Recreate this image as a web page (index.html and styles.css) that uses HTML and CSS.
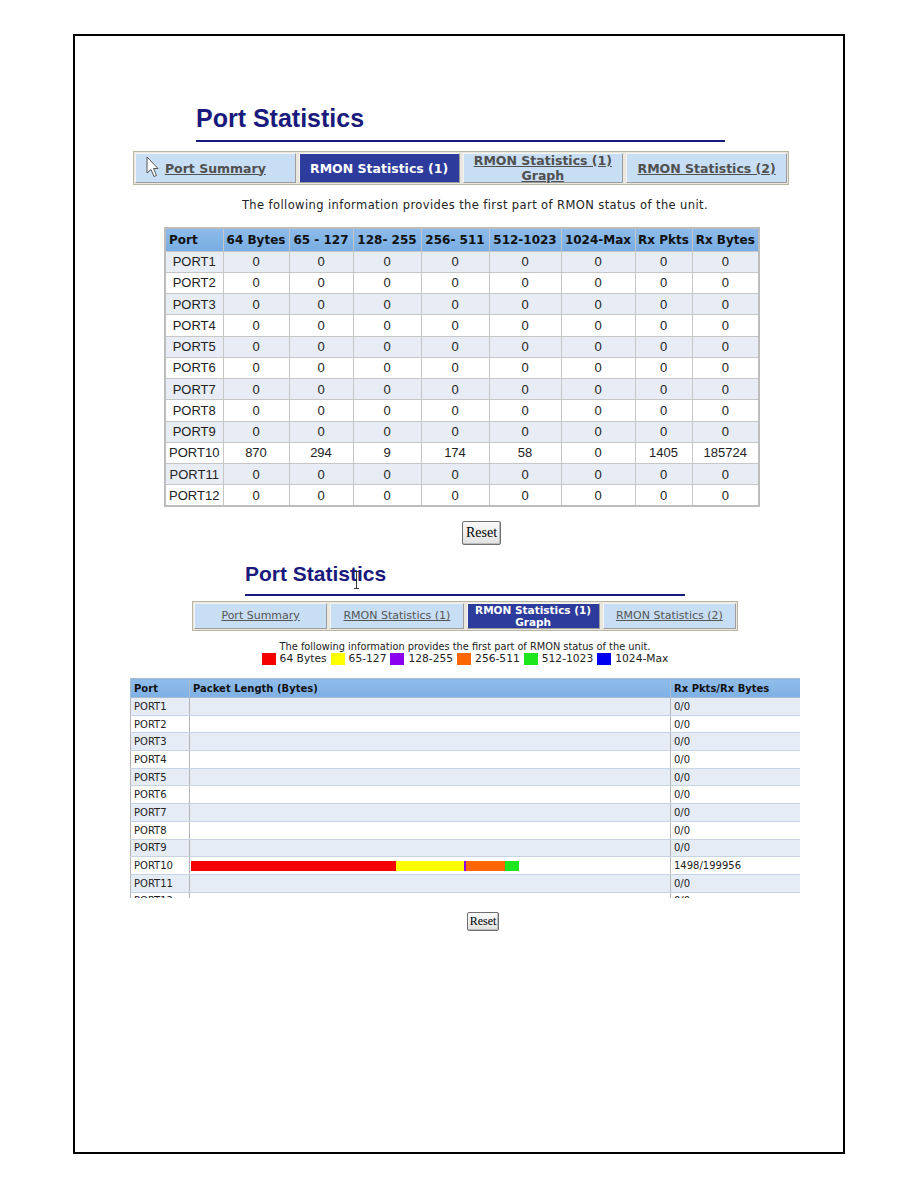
FILE: index.html
```html
<!DOCTYPE html>
<html>
<head>
<meta charset="utf-8">
<title>Port Statistics</title>
<link rel="stylesheet" href="styles.css">
</head>
<body>
<div class="page">
  <section class="panel1">
    <h1 class="title title1">Port Statistics</h1>
    <div class="tabs tabs1">
      <a class="tab tab-first">
        <svg class="cursor-arrow" width="13" height="22" viewBox="0 0 13 22"><path d="M1 1 L1 17 L5 13.5 L8 20.5 L10.5 19.5 L7.5 12.5 L12 12.5 Z" fill="#fff" stroke="#555" stroke-width="1"/></svg>
        <span>Port Summary</span>
      </a>
      <a class="tab active">RMON Statistics (1)</a>
      <a class="tab">RMON Statistics (1)<br>Graph</a>
      <a class="tab">RMON Statistics (2)</a>
    </div>
    <p class="info">The following information provides the first part of RMON status of the unit.</p>
    <table class="stats">
      <colgroup>
        <col class="w58"><col class="w66"><col class="w64"><col class="w68"><col class="w68"><col class="w72"><col class="w74"><col class="w57"><col class="w67">
      </colgroup>
      <thead>
        <tr><th class="port-h">Port</th><th>64 Bytes</th><th>65 - 127</th><th>128- 255</th><th>256- 511</th><th>512-1023</th><th>1024-Max</th><th>Rx Pkts</th><th>Rx Bytes</th></tr>
      </thead>
      <tbody>
        <tr><td>PORT1</td><td>0</td><td>0</td><td>0</td><td>0</td><td>0</td><td>0</td><td>0</td><td>0</td></tr>
        <tr><td>PORT2</td><td>0</td><td>0</td><td>0</td><td>0</td><td>0</td><td>0</td><td>0</td><td>0</td></tr>
        <tr><td>PORT3</td><td>0</td><td>0</td><td>0</td><td>0</td><td>0</td><td>0</td><td>0</td><td>0</td></tr>
        <tr><td>PORT4</td><td>0</td><td>0</td><td>0</td><td>0</td><td>0</td><td>0</td><td>0</td><td>0</td></tr>
        <tr><td>PORT5</td><td>0</td><td>0</td><td>0</td><td>0</td><td>0</td><td>0</td><td>0</td><td>0</td></tr>
        <tr><td>PORT6</td><td>0</td><td>0</td><td>0</td><td>0</td><td>0</td><td>0</td><td>0</td><td>0</td></tr>
        <tr><td>PORT7</td><td>0</td><td>0</td><td>0</td><td>0</td><td>0</td><td>0</td><td>0</td><td>0</td></tr>
        <tr><td>PORT8</td><td>0</td><td>0</td><td>0</td><td>0</td><td>0</td><td>0</td><td>0</td><td>0</td></tr>
        <tr><td>PORT9</td><td>0</td><td>0</td><td>0</td><td>0</td><td>0</td><td>0</td><td>0</td><td>0</td></tr>
        <tr><td>PORT10</td><td>870</td><td>294</td><td>9</td><td>174</td><td>58</td><td>0</td><td>1405</td><td>185724</td></tr>
        <tr><td>PORT11</td><td>0</td><td>0</td><td>0</td><td>0</td><td>0</td><td>0</td><td>0</td><td>0</td></tr>
        <tr><td>PORT12</td><td>0</td><td>0</td><td>0</td><td>0</td><td>0</td><td>0</td><td>0</td><td>0</td></tr>
      </tbody>
    </table>
    <div class="reset-row reset-row1"><button class="reset reset1">Reset</button></div>
  </section>

  <section class="panel2">
    <h1 class="title title2">Port Statistics<svg class="cursor-ibeam" width="7" height="18" viewBox="0 0 7 18"><path d="M1 0.5 H6 M3.5 0.5 V17.5 M1 17.5 H6" stroke="#333" stroke-width="1" fill="none"/></svg></h1>
    <div class="tabs tabs2">
      <a class="tab">Port Summary</a>
      <a class="tab">RMON Statistics (1)</a>
      <a class="tab active">RMON Statistics (1)<br>Graph</a>
      <a class="tab">RMON Statistics (2)</a>
    </div>
    <div class="legend">
      <div class="legend-note">The following information provides the first part of RMON status of the unit.</div>
      <div class="legend-keys">
        <span class="key"><i class="sw c-red"></i>64 Bytes</span>
        <span class="key"><i class="sw c-yellow"></i>65-127</span>
        <span class="key"><i class="sw c-purple"></i>128-255</span>
        <span class="key"><i class="sw c-orange"></i>256-511</span>
        <span class="key"><i class="sw c-green"></i>512-1023</span>
        <span class="key"><i class="sw c-blue"></i>1024-Max</span>
      </div>
    </div>
    <div class="graph-wrap">
      <table class="graph">
        <colgroup><col class="g1"><col class="g2"><col class="g3"></colgroup>
        <thead>
          <tr><th>Port</th><th>Packet Length (Bytes)</th><th>Rx Pkts/Rx Bytes</th></tr>
        </thead>
        <tbody>
          <tr><td class="port">PORT1</td><td class="len"></td><td class="rx">0/0</td></tr>
          <tr><td class="port">PORT2</td><td class="len"></td><td class="rx">0/0</td></tr>
          <tr><td class="port">PORT3</td><td class="len"></td><td class="rx">0/0</td></tr>
          <tr><td class="port">PORT4</td><td class="len"></td><td class="rx">0/0</td></tr>
          <tr><td class="port">PORT5</td><td class="len"></td><td class="rx">0/0</td></tr>
          <tr><td class="port">PORT6</td><td class="len"></td><td class="rx">0/0</td></tr>
          <tr><td class="port">PORT7</td><td class="len"></td><td class="rx">0/0</td></tr>
          <tr><td class="port">PORT8</td><td class="len"></td><td class="rx">0/0</td></tr>
          <tr><td class="port">PORT9</td><td class="len"></td><td class="rx">0/0</td></tr>
          <tr><td class="port">PORT10</td><td class="len"><div class="bar"><span class="seg c-red" style="width:205px"></span><span class="seg c-yellow" style="width:68px"></span><span class="seg c-purple" style="width:2px"></span><span class="seg c-orange" style="width:39px"></span><span class="seg c-green" style="width:14px"></span></div></td><td class="rx">1498/199956</td></tr>
          <tr><td class="port">PORT11</td><td class="len"></td><td class="rx">0/0</td></tr>
          <tr><td class="port">PORT12</td><td class="len"></td><td class="rx">0/0</td></tr>
        </tbody>
      </table>
    </div>
    <div class="reset-row reset-row2"><button class="reset reset2">Reset</button></div>
  </section>
</div>
</body>
</html>
```
FILE: styles.css
```css
* { box-sizing: border-box; }

body {
  margin: 0;
  background: #fff;
  font-family: "DejaVu Sans", Verdana, sans-serif;
  color: #222;
}

.page {
  margin: 34px 0 0 73px;
  width: 772px;
  height: 1120px;
  border: 2px solid #000;
}

/* Titles */
.title {
  margin: 0;
  font-family: "Liberation Sans", Arial, sans-serif;
  font-weight: bold;
  color: #1a1a7c;
  border-bottom: 2px solid #1a1a80;
  position: relative;
}
.title1 {
  font-size: 25px;
  line-height: 28px;
  margin: 68px 0 0 121px;
  width: 529px;
  padding-bottom: 8px;
}
.title2 {
  font-size: 21px;
  line-height: 24px;
  margin: 17px 0 0 170px;
  width: 440px;
  padding-bottom: 8px;
}
.cursor-ibeam {
  position: absolute;
  left: 108px;
  top: 9px;
}

/* Tabs */
.tabs {
  display: flex;
  gap: 3px;
  padding: 1px;
  background: #e9e7de;
  border: 1px solid #bab6a4;
}
.tab {
  flex: 1 1 0;
  display: flex;
  align-items: center;
  justify-content: center;
  text-align: center;
  background: #c8def5;
  color: #505050;
  text-decoration: underline;
  font-weight: bold;
  border: 1px solid #f4f4f4;
  border-right-color: #9c9c9c;
  border-bottom-color: #9c9c9c;
  position: relative;
}
.tab.active {
  background: #2d3b9c;
  color: #fff;
  text-decoration: none;
}
.tabs1 {
  margin: 9px 0 0 58px;
  width: 656px;
  height: 34px;
}
.tabs1 .tab {
  font-size: 12.5px;
  line-height: 15px;
}
.tabs2 {
  margin: 5px 0 0 117px;
  width: 546px;
  height: 30px;
}
.tabs2 .tab {
  font-size: 10.5px;
  line-height: 12px;
}
.tabs2 .tab:not(.active) {
  font-weight: normal;
  font-size: 11px;
  color: #555;
}
.cursor-arrow {
  position: absolute;
  left: 10px;
  top: 2px;
}

/* Info line */
.info {
  margin: 13px 0 0 58px;
  width: 656px;
  padding-left: 28px;
  text-align: center;
  font-size: 11.5px;
  letter-spacing: 0.4px;
  line-height: 14px;
  color: #222;
}

/* Statistics table */
.stats {
  margin: 15px 0 0 89px;
  width: 594px;
  table-layout: fixed;
  border-collapse: collapse;
  border: 2px solid #bdbdbd;
  font-family: "Liberation Sans", Arial, sans-serif;
  font-size: 13px;
  color: #222;
}
.w58 { width: 58px; }
.w66 { width: 66px; }
.w64 { width: 64px; }
.w68 { width: 68px; }
.w72 { width: 72px; }
.w74 { width: 74px; }
.w57 { width: 57px; }
.w67 { width: 67px; }
.stats th {
  height: 23px;
  padding: 0;
  background: linear-gradient(#8dbbea, #78ade3);
  border: 1px solid #c6c6c6;
  font-family: "DejaVu Sans", Verdana, sans-serif;
  font-size: 12px;
  font-weight: bold;
  color: #111;
  white-space: nowrap;
  text-align: center;
}
.stats th.port-h {
  text-align: left;
  padding-left: 3px;
}
.stats td {
  height: 21.25px;
  padding: 0;
  text-align: center;
  border: 1px solid #c6c6c6;
  background: #fff;
}
.stats tbody tr:nth-child(odd) td {
  background: #e8edf5;
}

/* Reset buttons */
.reset-row { display: flex; }
.reset-row1 { margin-top: 14px; padding-left: 387px; }
.reset-row2 { margin-top: 14px; padding-left: 392px; }
.reset {
  font-family: "Liberation Serif", "Times New Roman", serif;
  color: #000;
  background: linear-gradient(#fafafa, #e2e2e2);
  border: 1px solid #6f6f6f;
  border-radius: 2px;
  padding: 0;
  box-shadow: inset -1px -1px 0 #bcbcbc;
}
.reset1 { width: 39px; height: 24px; font-size: 14px; }
.reset2 { width: 32px; height: 19px; font-size: 12px; }

/* Legend */
.legend {
  margin: 10px 0 0 55px;
  width: 670px;
  text-align: center;
}
.legend-note {
  font-size: 9.8px;
  line-height: 11px;
  color: #222;
}
.legend-keys {
  display: flex;
  justify-content: center;
  gap: 4px;
  font-size: 10.7px;
  line-height: 13px;
  color: #222;
}
.key {
  display: flex;
  align-items: center;
  gap: 4px;
}
.sw {
  display: inline-block;
  width: 14px;
  height: 12px;
}
.c-red { background: #f40000; }
.c-yellow { background: #ffff00; }
.c-purple { background: #8c00f0; }
.c-orange { background: #ff6600; }
.c-green { background: #1de61d; }
.c-blue { background: #0000f0; }

/* Graph table */
.graph-wrap {
  margin: 13px 0 0 55px;
  width: 670px;
  height: 220px;
  overflow: hidden;
}
.graph {
  width: 670px;
  table-layout: fixed;
  border-collapse: collapse;
  font-size: 10px;
  color: #222;
}
.g1 { width: 59px; }
.g2 { width: 481px; }
.g3 { width: 130px; }
.graph th {
  height: 19px;
  padding: 0 0 0 3px;
  background: linear-gradient(#90bdea, #7eb0e4);
  border: 1px solid #a9bcd0;
  font-size: 10px;
  font-weight: bold;
  color: #111;
  text-align: left;
  white-space: nowrap;
}
.graph td {
  height: 17.7px;
  padding: 0 0 0 3px;
  background: #fff;
  border-bottom: 1px solid #c6d4e3;
  white-space: nowrap;
}
.graph tbody tr:nth-child(odd) td {
  background: #e5ecf5;
}
.graph td.port {
  border-left: 1px solid #b5b5b5;
  border-right: 1px solid #b5b5b5;
}
.graph td.len {
  padding-left: 1px;
}
.graph td.rx {
  border-left: 1px solid #b5b5b5;
}
.bar {
  display: flex;
  height: 10px;
}
.seg {
  display: block;
  height: 10px;
}
```
